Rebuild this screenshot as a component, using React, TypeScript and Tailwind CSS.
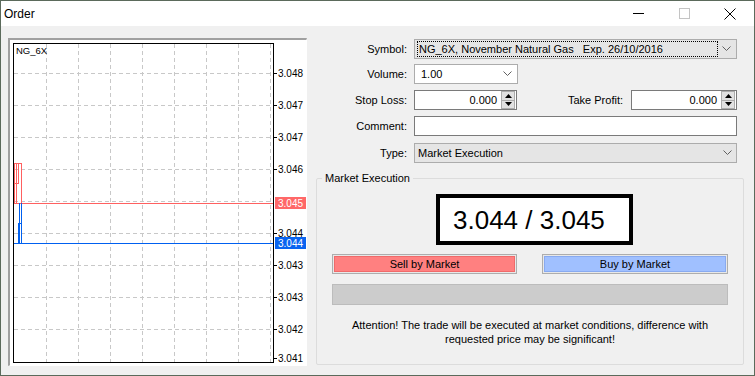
import React from 'react';

const font = { fontFamily: '"Liberation Sans", Arial, sans-serif' };

const Chevron = () => (
  <svg width="9" height="6" viewBox="0 0 9 6">
    <path d="M0.5 0.5 L4.5 4.5 L8.5 0.5" fill="none" stroke="#606060" strokeWidth="1" />
  </svg>
);

const Spinner = () => (
  <div className="flex flex-col w-[14px] h-[18px] border border-[#acacac] bg-[#e1e1e1]">
    <div className="flex-1 flex items-center justify-center border-b border-[#acacac]">
      <svg width="7" height="4" viewBox="0 0 7 4"><path d="M0 4 L3.5 0 L7 4 Z" fill="#000" /></svg>
    </div>
    <div className="flex-1 flex items-center justify-center">
      <svg width="7" height="4" viewBox="0 0 7 4"><path d="M0 0 L3.5 4 L7 0 Z" fill="#000" /></svg>
    </div>
  </div>
);

// price axis labels, y in chart coords
const labels: [string, number][] = [
  ['3.048', 33], ['3.047', 65], ['3.047', 97], ['3.046', 129],
  ['3.044', 193], ['3.043', 225], ['3.043', 257], ['3.042', 289], ['3.041', 318],
];
const vGrid = [36, 68, 100, 132, 164, 196, 228, 260];
const hGrid = [33, 65, 97, 129, 161, 193, 225, 257, 289];

const Chart = () => (
  <svg width="297" height="326" viewBox="0 0 297 326" style={font}>
    <rect x="0" y="0" width="297" height="326" fill="#fff" />
    {vGrid.map((x) => (
      <line key={'v' + x} x1={x + 0.5} y1={4} x2={x + 0.5} y2={322} stroke="#c8c8c8" strokeDasharray="4 3" />
    ))}
    {hGrid.map((y) => (
      <line key={'h' + y} x1={4} y1={y + 0.5} x2={263} y2={y + 0.5} stroke="#c8c8c8" strokeDasharray="4 3" />
    ))}
    <rect x="3.5" y="3.5" width="260" height="319" fill="none" stroke="#000" />
    <text x="6" y="14" fontSize="9.5" fill="#000">NG_6X</text>

    {/* ask candles */}
    <g stroke="#ff6060" fill="none">
      <line x1="4.5" y1="123" x2="4.5" y2="163" />
      <line x1="6.5" y1="123" x2="6.5" y2="163" />
      <line x1="8.5" y1="123" x2="8.5" y2="143" />
      <line x1="11.5" y1="123" x2="11.5" y2="163" />
      <line x1="4" y1="123.5" x2="12" y2="123.5" />
      <line x1="4" y1="143.5" x2="9" y2="143.5" />
      <line x1="4" y1="163.5" x2="263" y2="163.5" />
    </g>
    {/* bid candles */}
    <g stroke="#0060f0" fill="none">
      <line x1="8.5" y1="183" x2="8.5" y2="203" />
      <line x1="9.5" y1="163" x2="9.5" y2="203" />
      <line x1="11.5" y1="163" x2="11.5" y2="203" />
      <line x1="8" y1="183.5" x2="12" y2="183.5" />
      <line x1="4" y1="203.5" x2="263" y2="203.5" />
    </g>

    {labels.map(([t, y], i) => (
      <g key={i}>
        <line x1="264" y1={y + 0.5} x2="267" y2={y + 0.5} stroke="#000" />
        <text x="268" y={y + 4} fontSize="10" fill="#000">{t}</text>
      </g>
    ))}
    <rect x="265" y="157" width="31" height="12" fill="#ff6868" />
    <text x="268" y="167" fontSize="10" fill="#fff">3.045</text>
    <rect x="265" y="197" width="31" height="12" fill="#0a64f0" />
    <text x="268" y="207" fontSize="10" fill="#fff">3.044</text>
  </svg>
);

export default function App() {
  return (
    <div className="w-[755px] h-[376px] border border-[#5b6a5b] bg-[#f0f0f0] flex flex-col text-[11px] text-black" style={font}>
      {/* title bar */}
      <div className="h-[25px] bg-white flex items-center">
        <span className="pl-[3px] text-[12px] flex-1">Order</span>
        <div className="w-[46px] h-full flex items-center justify-center">
          <svg width="11" height="2" viewBox="0 0 11 2"><line x1="0" y1="0.5" x2="11" y2="0.5" stroke="#000" /></svg>
        </div>
        <div className="w-[46px] h-full flex items-center justify-center">
          <svg width="11" height="11" viewBox="0 0 11 11"><rect x="0.5" y="0.5" width="10" height="10" fill="none" stroke="#c4c4c4" /></svg>
        </div>
        <div className="w-[46px] h-full flex items-center justify-center mr-[1px]">
          <svg width="12" height="12" viewBox="0 0 12 12"><path d="M0.5 0.5 L11.5 11.5 M11.5 0.5 L0.5 11.5" stroke="#000" strokeWidth="1" /></svg>
        </div>
      </div>

      <div className="flex-1 flex">
        {/* chart panel */}
        <div className="ml-[7px] mt-[12px] w-[299px] h-[328px] border-t-2 border-l-2 border-t-[#a0a0a0] border-l-[#a0a0a0] border-r border-b border-r-[#e3e3e3] border-b-[#e3e3e3] bg-white">
          <Chart />
        </div>

        {/* form */}
        <div className="flex-1 pt-[13px]">
          <div className="flex items-center h-[20px]">
            <span className="w-[100px] text-right">Symbol:</span>
            <div className="ml-[7px] w-[323px] h-[20px] bg-[#e5e5e5] border border-[#acacac] flex items-center px-[2px]">
              <div className="flex-1 h-[16px] border border-dotted border-black flex items-center pl-[1px] whitespace-pre">
                NG_6X, November Natural Gas   Exp. 26/10/2016
              </div>
              <div className="w-[16px] flex justify-center"><Chevron /></div>
            </div>
          </div>

          <div className="flex items-center h-[20px] mt-[5px]">
            <span className="w-[100px] text-right">Volume:</span>
            <div className="ml-[7px] w-[104px] h-[20px] bg-white border border-[#acacac] flex items-center pl-[6px] pr-[5px]">
              <span className="flex-1">1.00</span>
              <Chevron />
            </div>
          </div>

          <div className="flex items-center h-[20px] mt-[6px]">
            <span className="w-[100px] text-right">Stop Loss:</span>
            <div className="ml-[7px] w-[103px] h-[20px] bg-white border border-[#7a7a7a] flex items-center justify-end pr-[1px]">
              <span className="mr-[4px]">0.000</span>
              <Spinner />
            </div>
            <span className="w-[106px] text-right">Take Profit:</span>
            <div className="ml-[8px] w-[106px] h-[20px] bg-white border border-[#7a7a7a] flex items-center justify-end pr-[1px]">
              <span className="mr-[4px]">0.000</span>
              <Spinner />
            </div>
          </div>

          <div className="flex items-center h-[20px] mt-[6px]">
            <span className="w-[100px] text-right">Comment:</span>
            <div className="ml-[7px] w-[323px] h-[20px] bg-white border border-[#7a7a7a]" />
          </div>

          <div className="flex items-center h-[20px] mt-[7px]">
            <span className="w-[100px] text-right">Type:</span>
            <div className="ml-[7px] w-[323px] h-[20px] bg-[#e5e5e5] border border-[#acacac] flex items-center pl-[3px]">
              <span className="flex-1">Market Execution</span>
              <div className="w-[18px] flex justify-center"><Chevron /></div>
            </div>
          </div>

          <fieldset className="ml-[9px] mt-[9px] w-[428px] h-[193px] border border-[#dcdcdc] rounded-[2px]">
            <legend className="ml-[5px] px-[3px] leading-[13px]">Market Execution</legend>
            <div className="ml-[119px] mt-[9px] w-[197px] h-[51px] border-4 border-black bg-white flex items-center pl-[13px] text-[26px] leading-none">
              3.044 / 3.045
            </div>
            <div className="flex ml-[15px] mt-[9px] gap-[25px]">
              <div className="w-[185px] h-[20px] border border-[#adadad] bg-[#e8e8e8] p-px">
                <div className="h-full bg-[#ff8080] border border-[#f06a6a] flex items-center justify-center">Sell by Market</div>
              </div>
              <div className="w-[186px] h-[20px] border border-[#adadad] bg-[#e8e8e8] p-px">
                <div className="h-full bg-[#a0c0ff] border border-[#88aaf0] flex items-center justify-center">Buy by Market</div>
              </div>
            </div>
            <div className="ml-[15px] mt-[10px] w-[396px] h-[21px] bg-[#cccccc] border border-[#bcbcbc]" />
            <div className="mt-[13px] text-center leading-[14px]">
              Attention! The trade will be executed at market conditions, difference with<br />
              requested price may be significant!
            </div>
          </fieldset>
        </div>
      </div>
    </div>
  );
}
